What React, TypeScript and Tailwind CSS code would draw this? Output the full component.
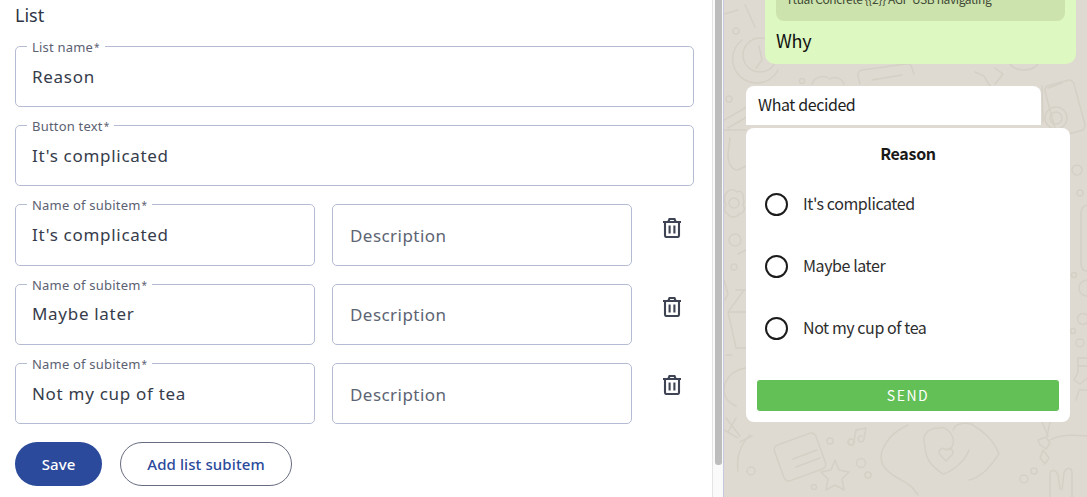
const rightFont = { fontFamily: '"Noto Sans CJK SC", "Noto Sans", sans-serif' };

function Field({ label, value, className = '' }: { label?: string; value?: string; className?: string }) {
  return (
    <div className={`relative h-[61.2px] rounded-[5px] border border-[#b6bbd4] flex items-center pl-4 ${className}`}>
      {label && (
        <span className="absolute -top-[8px] left-[11px] bg-white px-[5px] text-[13px] leading-4 tracking-[0.2px] text-[#5b6172]">
          {label}
          <span className="ml-[1px] text-[10px] align-top">*</span>
        </span>
      )}
      {value ? (
        <span className="text-[17px] tracking-[0.7px] text-[#363c4b]">{value}</span>
      ) : (
        <span className="pl-[1px] text-[17px] tracking-[0.45px] text-[#5d6473] translate-y-[1px]">Description</span>
      )}
    </div>
  );
}

function TrashIcon() {
  return (
    <svg width="18" height="20" viewBox="0 0 18 20" fill="none" stroke="#3f4454" strokeWidth="2.1">
      <path d="M0 4h18M5.5 3.5L6.5 1h5l1 2.5" />
      <path d="M2 4v13.5A1.5 1.5 0 0 0 3.5 19h11a1.5 1.5 0 0 0 1.5-1.5V4" />
      <path d="M6.6 7.5v8M11.4 7.5v8" />
    </svg>
  );
}

function SubRow({ value, iconClass }: { value: string; iconClass: string }) {
  return (
    <div className="flex">
      <Field label="Name of subitem" value={value} className="w-[300px]" />
      <Field className="w-[300px] ml-[17px]" />
      <div className={`w-[80px] flex justify-center ${iconClass}`}>
        <TrashIcon />
      </div>
    </div>
  );
}

function Radio({ label }: { label: string }) {
  return (
    <div className="h-[62px] flex items-center pl-[19px]">
      <span className="w-[23px] h-[23px] rounded-full border-2 border-[#1c1c1c]" />
      <span className="ml-[15px] text-[16px] tracking-[-0.42px] leading-6 -translate-y-[1px] text-[#2e2e2e]">{label}</span>
    </div>
  );
}

function Wallpaper() {
  return (
    <svg className="absolute inset-0 w-full h-full" viewBox="724 0 363 497" fill="none" stroke="#d5d0c6" strokeWidth="1.5" strokeLinecap="round" strokeLinejoin="round">
      {/* clock, top left */}
      <circle cx="760" cy="55" r="17" />
      <path d="M742 40a24 24 0 1 0 36 30" />
      <path d="M759 46l3 14-6 8" />
      <circle cx="736" cy="31" r="3" />
      <path d="M745 5l10 22M724 14l14-4" />
      {/* strip between the bubbles */}
      <path d="M724 120l28-16M728 128l24-14" />
      <circle cx="729" cy="99" r="3" />
      <circle cx="802" cy="81" r="2.5" />
      <path d="M812 84c2-7 12-10 18-5 4-3 12-1 14 5" />
      <path d="M860 84l-2-8a5 5 0 0 1 4-6l44-6a5 5 0 0 1 6 4l2 6M872 80l30-5" />
      <path d="M975 72l9 4 6 10M995 84l8-10-8-6" />
      <path d="M1010 64c6 8 22 8 28 0" />
      {/* phone, right */}
      <rect x="1050" y="82" width="30" height="52" rx="5" transform="rotate(-15 1065 108)" />
      <path d="M1043 122l-1-36M1048 88l14-5" />
      <circle cx="1056" cy="118" r="11" />
      <circle cx="1056" cy="118" r="6" />
      {/* left strip */}
      <path d="M730 138l-2 16c0 10 4 16 10 16l8-4M724 130h22" />
      <path d="M727 192c4-4 8-2 10 0 3-2 6 0 6 4 0 3 2 6 0 9 3 4 0 9-4 9-3 4-9 4-11 0-4-1-4-6-2-9-2-4-2-10 1-13z" />
      <circle cx="734" cy="203" r="5" />
      <circle cx="735" cy="240" r="6" />
      <circle cx="734" cy="267" r="3" />
      <path d="M738 254l8-4" />
      <path d="M724 280l4 14-3 6M736 290h10M744 290l-16 22 8 36h10M728 312h18" />
      <path d="M726 355h6" />
      <path d="M746 368c-14 2-22 12-22 22 0 8 6 14 12 16" />
      {/* right strip */}
      <circle cx="1077" cy="170" r="5" />
      <circle cx="1080" cy="193" r="3" />
      <path d="M1087 205c-4 1-6 4-6 8v50c0 5 2 8 6 8" />
      <circle cx="1074" cy="275" r="2.5" />
      <path d="M1087 280a6 6 0 0 0 0 16" />
      <circle cx="1083" cy="319" r="5.5" />
      <circle cx="1073" cy="331" r="2.5" />
      <circle cx="1080" cy="343" r="4" />
      <path d="M1079 358h8M1079 366h8M1078 358v14l-4 8 6 4 7-6M1078 372l-4 8M1087 390h-8l-3 10" />
      {/* bottom row */}
      <path d="M726 418l14 18M736 418l-8 14M724 430l14 8M752 436l-12 6" />
      <path d="M750 435c-8 8-14 20-12 36" />
      <rect x="778" y="438" width="44" height="38" rx="5" transform="rotate(-20 800 457)" />
      <path d="M793 459l24-9M796 467l24-9" />
      <circle cx="830" cy="441" r="3" />
      <circle cx="751" cy="471" r="4" />
      <circle cx="814" cy="487" r="2.5" />
      <circle cx="851" cy="442" r="3" />
      <path d="M851 439a3 3 0 1 0 3 2l2-11 10-2-2 10a3 3 0 1 1-2-2" />
      <path d="M835 460l4 10 10 2-7 7 2 11-9-5-9 5 2-11-7-7 10-2z" />
      <circle cx="861" cy="463" r="4.5" />
      <circle cx="868" cy="475" r="3" />
      <path d="M908 425c-14 6-22 16-26 26-4 12 4 20 14 26 10 6 16 8 22 18" />
      <path d="M925 446c-4-10 2-18 14-18 6-2 12 4 14 10 2 8-4 12-4 12M925 446c0 12 6 20 18 28 8-2 22-12 26-24" />
      <path d="M953 430c2-6 10-8 18-6 10 6 22 14 28 30-6 8-14 22-30 26" />
      <path d="M946 450c-3-4-9 0-6 5l6 6 6-6c3-5-3-9-6-5z" />
      <circle cx="1024" cy="479" r="4" />
      <circle cx="1034" cy="471" r="3" />
      <path d="M1050 497v-22c0-6 6-6 8 0l2 14M1062 490l2-17c2-6 8-6 8 0v24" />
      <path d="M1042 422l6 14M1050 422l-3 14M1038 440l8-3 4 6-4 6-6-4zM1043 450l-3 8 5 6 4-6z" />
      <path d="M1050 440c6-4 18-6 37-4" />
    </svg>
  );
}

export default function App() {
  return (
    <div className="h-[497px] w-[1087px] flex overflow-hidden bg-white" style={{ fontFamily: '"Noto Sans", sans-serif' }}>
      {/* form */}
      <div className="w-[712px] h-full pl-[15px] flex flex-col">
        <div className="h-[46px] pt-[3px] text-[18px] leading-6 text-[#2f3545]">List</div>
        <div className="flex flex-col gap-[18px] w-[679px]">
          <Field label="List name" value="Reason" />
          <Field label="Button text" value="It's complicated" />
        </div>
        <div className="flex flex-col gap-[18px] mt-[18px]">
          <SubRow value="It's complicated" iconClass="pt-[14px]" />
          <SubRow value="Maybe later" iconClass="pt-[13px]" />
          <SubRow value="Not my cup of tea" iconClass="pt-[12px]" />
        </div>
        <div className="flex gap-[18px] mt-[18px]">
          <button className="w-[87px] h-[44px] rounded-full bg-[#2b4a9b] text-white text-[15px] tracking-[0.1px] font-medium">Save</button>
          <button className="w-[172px] h-[44px] rounded-full border border-[#676c80] text-[#2b4a9b] text-[15px] tracking-[0.1px] font-medium">Add list subitem</button>
        </div>
      </div>

      {/* scrollbar */}
      <div className="w-[12px] h-full border-l border-[#e4e4e4] border-r border-r-[#c6cae0] bg-[#fafafa] pl-[2px] pr-[1px]">
        <div className="w-full h-[465px] rounded-b-[3px] bg-[#bdbdbd]" />
      </div>

      {/* preview */}
      <div className="relative flex-1 h-full bg-[#dfdad1] overflow-hidden" style={rightFont}>
        <Wallpaper />
        <div className="relative flex flex-col h-full pl-[22px]">
          <div className="ml-[19px] w-[311px] h-[64px] rounded-b-[10px] bg-[#ddf8c0] px-[11px] flex flex-col">
            <div className="h-[21px] rounded-b-[8px] bg-[#cde3ae] overflow-hidden flex items-end pb-[14px] px-[10px]">
              <span className="text-[12px] leading-4 tracking-[-0.4px] whitespace-nowrap text-[#3f4a34]">Ttual Concrete {'{{2}}'} AGP USB navigating</span>
            </div>
            <div className="text-[18px] leading-6 text-[#111] mt-[7px] tracking-[-0.3px]">Why</div>
          </div>
          <div className="mt-[22px] w-[295px] h-[39px] rounded-t-[8px] bg-white px-[12px] pb-[3px] flex items-center text-[16px] tracking-[-0.4px] text-[#1f1f1f]">What decided</div>
          <div className="mt-[3px] w-[324px] h-[294px] rounded-[8px] bg-white flex flex-col">
            <div className="h-[45px] flex items-start justify-center pt-[13px] text-[16px] font-bold tracking-[-0.3px] leading-6 text-[#1a1a1a]">Reason</div>
            <div>
              <Radio label="It's complicated" />
              <Radio label="Maybe later" />
              <Radio label="Not my cup of tea" />
            </div>
            <div className="mx-[11px] mt-[21px] h-[31px] rounded-[3px] bg-[#62c056] text-white text-[14px] tracking-[1.5px] flex items-center justify-center">SEND</div>
          </div>
        </div>
      </div>
    </div>
  );
}
